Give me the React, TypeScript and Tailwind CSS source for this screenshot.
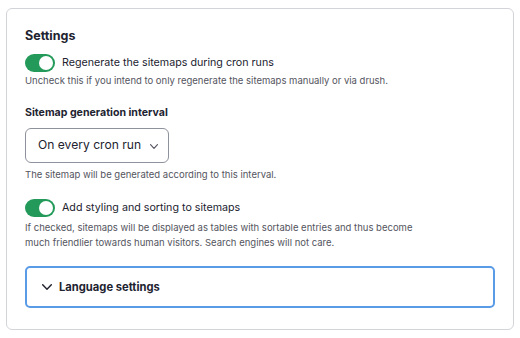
const Toggle = () => (
    <span className="relative inline-flex h-[18px] w-[30px] shrink-0 items-center rounded-full bg-[#239a5a]">
        <span className="absolute right-[2px] h-[14px] w-[14px] rounded-full bg-white" />
    </span>
)

const Chevron = ({ w, h, stroke }: { w: number; h: number; stroke: number }) => (
    <svg width={w} height={h} viewBox={`0 0 ${w} ${h}`} fill="none" className="shrink-0">
        <path
            d={`M${stroke / 2} ${stroke / 2} L${w / 2} ${h - stroke / 2} L${w - stroke / 2} ${stroke / 2}`}
            stroke="currentColor"
            strokeWidth={stroke}
            strokeLinecap="round"
            strokeLinejoin="round"
        />
    </svg>
)

export default function App() {
    return (
        <div className="min-h-[338px] w-[520px] bg-white px-[6px] pt-[8px] text-[#222330]" style={{ fontFamily: "Inter, 'Noto Sans', sans-serif" }}>
            <div className="flex h-[322px] flex-col rounded-[6px] border border-[#d3d4d9] px-[18px] pt-[19px]">
                <h2 className="text-[12.5px] font-bold leading-[16px]">Settings</h2>

                <label className="mt-[10px] flex items-center gap-[7px]">
                    <Toggle />
                    <span className="text-[10.7px] leading-[18px]">Regenerate the sitemaps during cron runs</span>
                </label>
                <p className="mt-[2px] text-[9.5px] leading-[14px] text-[#545560]">
                    Uncheck this if you intend to only regenerate the sitemaps manually or via drush.
                </p>

                <div className="mt-[17px] text-[10.6px] font-bold leading-[16px]">Sitemap generation interval</div>
                <div className="mt-[7px] flex h-[35px] w-[144px] items-center whitespace-nowrap rounded-[6px] border border-[#8e929c] pl-[12px] text-[12.1px]">
                    <span>On every cron run</span>
                    <span className="ml-[9px] mt-[2px] text-[#545560]">
                        <Chevron w={8} h={5} stroke={1.1} />
                    </span>
                </div>
                <p className="mt-[5px] text-[9.5px] leading-[14px] text-[#545560]">
                    The sitemap will be generated according to this interval.
                </p>

                <label className="mt-[17px] flex items-center gap-[7px]">
                    <Toggle />
                    <span className="text-[10.7px] leading-[18px]">Add styling and sorting to sitemaps</span>
                </label>
                <p className="mt-[3px] w-[400px] text-[9.5px] leading-[15px] text-[#545560]">
                    If checked, sitemaps will be displayed as tables with sortable entries and thus become much friendlier towards human visitors. Search engines will not care.
                </p>

                <div className="mt-[16px] flex h-[42px] items-center gap-[7px] rounded-[5px] border-2 border-[#5a9be8] pl-[15px]">
                    <Chevron w={10} h={6} stroke={1.4} />
                    <span className="text-[11.2px] font-bold">Language settings</span>
                </div>
            </div>
        </div>
    )
}
